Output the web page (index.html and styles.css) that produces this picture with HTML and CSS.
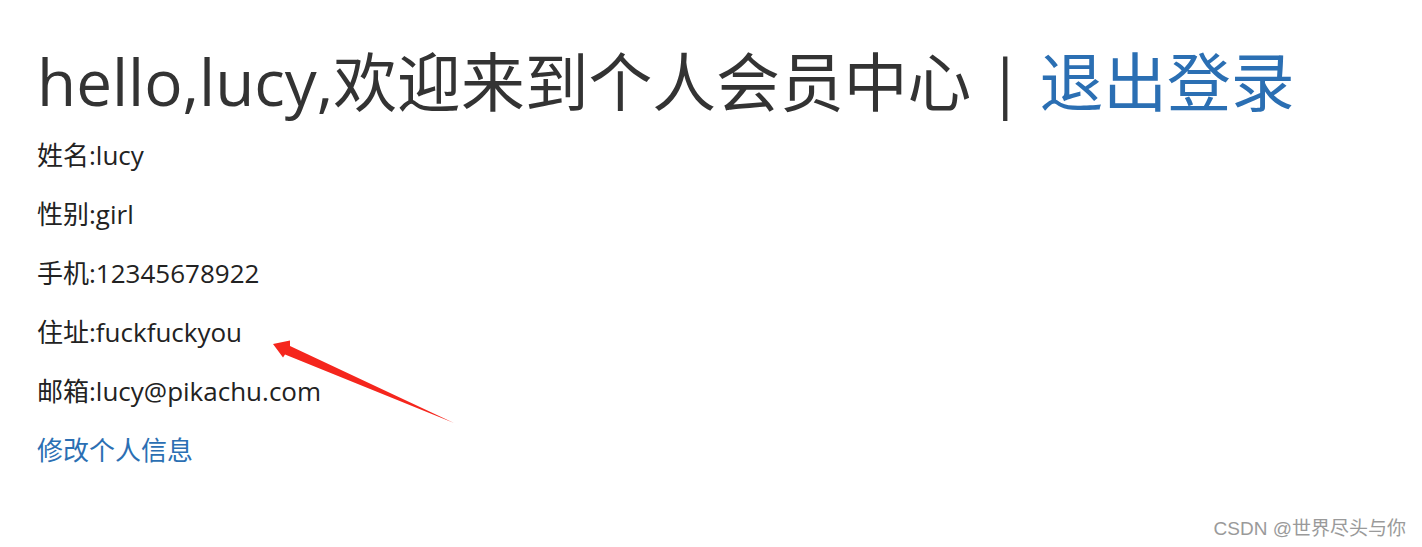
FILE: index.html
```html
<!DOCTYPE html>
<html lang="zh-CN">
<head>
<meta charset="utf-8">
<title>个人会员中心</title>
<link rel="stylesheet" href="styles.css">
</head>
<body>
<div class="page">
  <h1 class="title">hello,lucy,欢迎来到个人会员中心 <span class="sep">|</span> <a class="link" href="#">退出登录</a></h1>
  <p class="row">姓名:lucy</p>
  <p class="row">性别:girl</p>
  <p class="row">手机:12345678922</p>
  <p class="row">住址:fuckfuckyou</p>
  <p class="row">邮箱:lucy@pikachu.com</p>
  <p class="row"><a class="link" href="#">修改个人信息</a></p>
</div>
<svg class="arrow" width="200" height="100" viewBox="0 0 200 100">
  <polygon points="1,6 18,2.5 18,8 182,85 13,16.5 11,19.5" fill="#f5261d"/>
</svg>
<div class="watermark">CSDN @世界尽头与你</div>
</body>
</html>
```
FILE: styles.css
```css
html, body {
  margin: 0;
  padding: 0;
  background: #fff;
}
body {
  font-family: "Open Sans", "Noto Sans CJK SC", sans-serif;
  color: #333;
  position: relative;
  width: 1422px;
  height: 547px;
  overflow: hidden;
}
.page {
  padding: 46px 0 0 37px;
}
.title {
  margin: 0 0 18px 0;
  font-size: 63.8px;
  font-weight: 400;
  line-height: 71px;
  color: #333;
  white-space: nowrap;
}
.link {
  color: #2b6fb3;
  text-decoration: none;
}
.row {
  margin: 0 0 18px 0;
  font-size: 26px;
  line-height: 41px;
  color: #222;
}
.arrow {
  position: absolute;
  left: 272px;
  top: 338px;
}
.watermark {
  position: absolute;
  right: 16px;
  bottom: 7px;
  font-family: "Liberation Sans", "Noto Sans CJK SC", sans-serif;
  font-size: 19px;
  color: #9a9a9a;
}
```
